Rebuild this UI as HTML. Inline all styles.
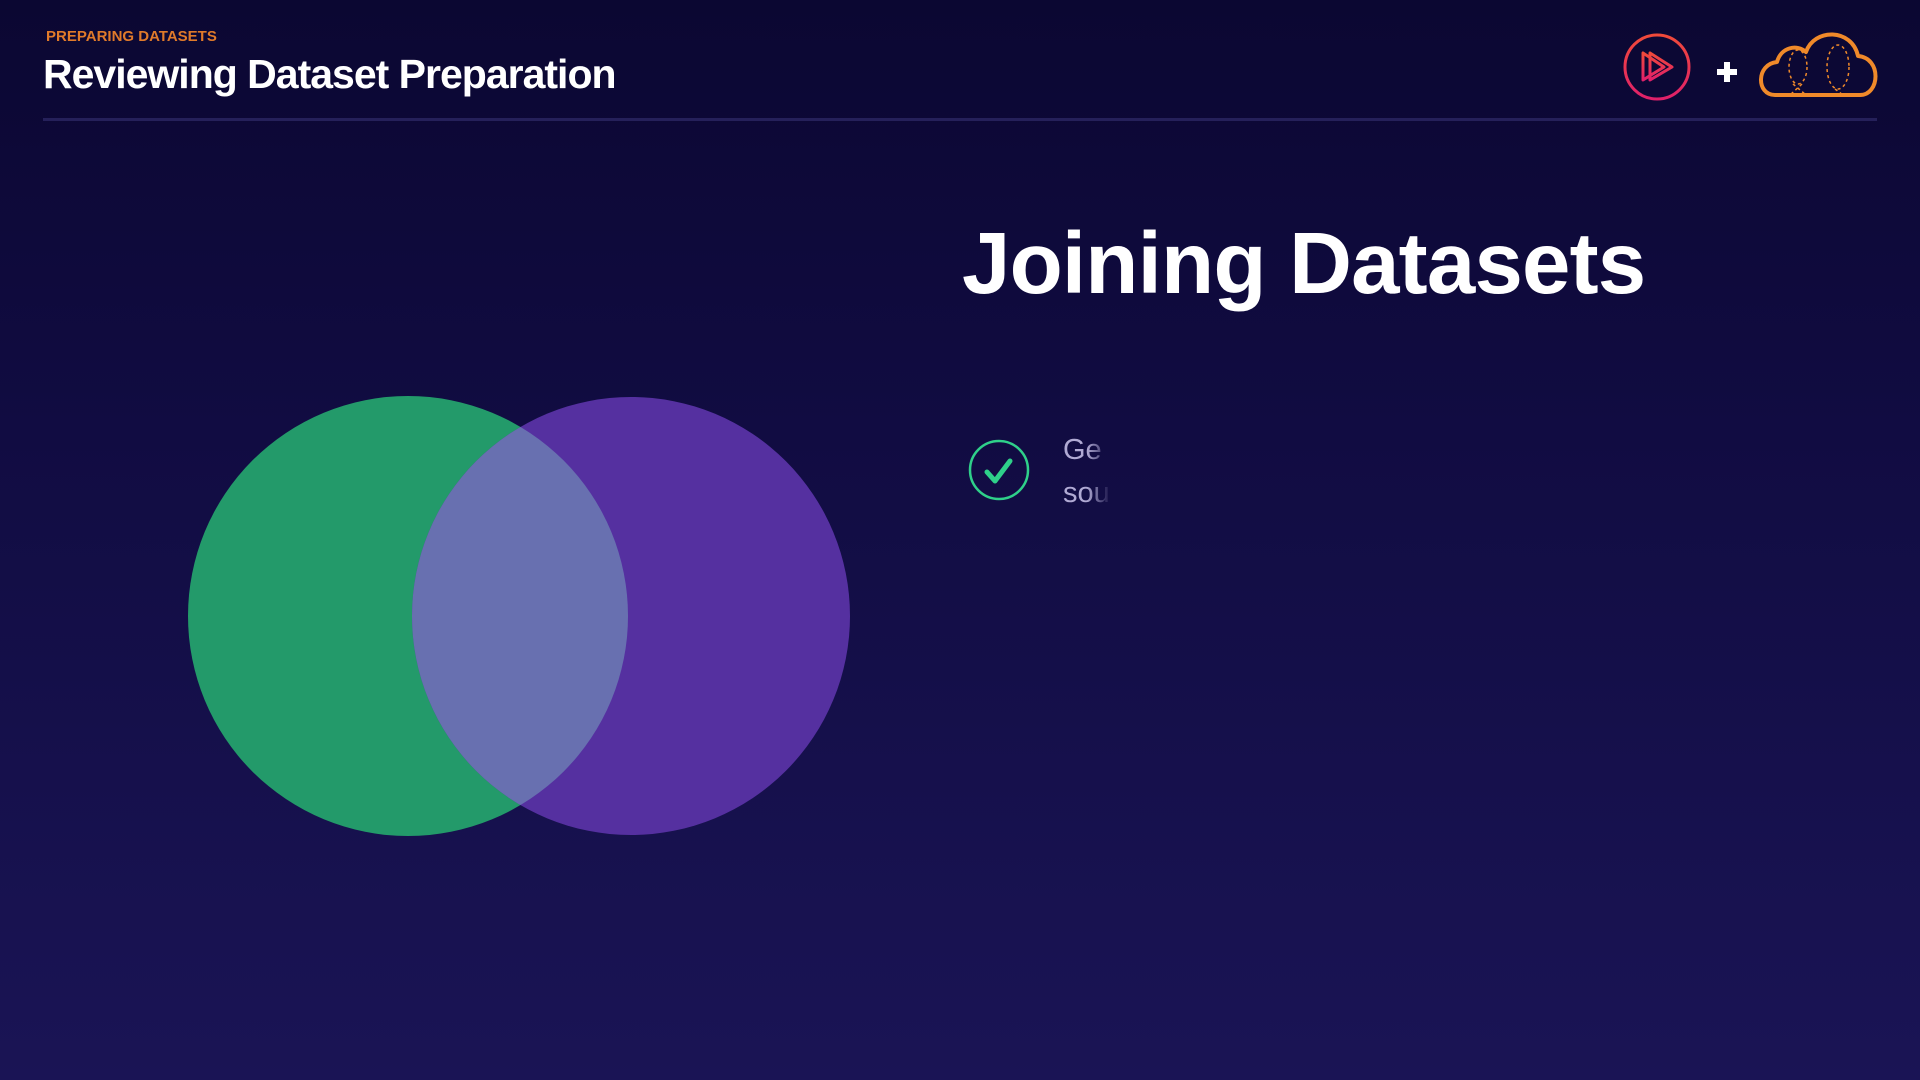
<!DOCTYPE html>
<html><head><meta charset="utf-8"><style>
html,body{margin:0;padding:0}
body{width:1920px;height:1080px;overflow:hidden;position:relative;background:linear-gradient(180deg,#0b0732 0%,#110c42 40%,#1a1455 100%);font-family:"Liberation Sans",sans-serif}
.lbl{position:absolute;left:46px;top:28px;color:#e07a2a;font-weight:bold;font-size:15px;letter-spacing:0}
.ttl{position:absolute;left:43px;top:51px;color:#fff;font-weight:bold;font-size:41px;letter-spacing:-1px}
.line{position:absolute;left:43px;top:118px;width:1834px;height:3px;background:#25205a}
.big{position:absolute;left:962px;top:214px;color:#fff;font-weight:bold;font-size:87px;letter-spacing:-0.8px}
.txt{position:absolute;left:1063px;color:#b0aad4;font-size:29px;width:48px;overflow:hidden;white-space:nowrap;-webkit-mask-image:linear-gradient(90deg,#000 50%,transparent);mask-image:linear-gradient(90deg,#000 50%,transparent)}
</style></head><body>
<div class="lbl">PREPARING DATASETS</div>
<div class="ttl">Reviewing Dataset Preparation</div>
<div class="line"></div>
<svg style="position:absolute;left:1610px;top:25px" width="280" height="90" viewBox="1610 25 280 90">
<defs><linearGradient id="pg" x1="0" y1="0" x2="0" y2="1"><stop offset="0" stop-color="#f04a3a"/><stop offset="1" stop-color="#e0206a"/></linearGradient></defs>
<circle cx="1657" cy="67" r="32" fill="none" stroke="url(#pg)" stroke-width="3"/>
<path d="M1643 53 L1643 80 L1664 67 Z M1650 53 L1650 80 L1672 67 Z" fill="none" stroke="url(#pg)" stroke-width="3" stroke-linejoin="round"/>
<path d="M1727 62 V82 M1717 72 H1737" stroke="#fff" stroke-width="6"/>
<path d="M1775 95 C1756 95 1756 64 1777 62 C1781 47 1797 44 1806 52 C1814 28 1852 28 1858 56 C1882 58 1880 95 1860 95 Z" fill="none" stroke="#f08a2a" stroke-width="4" stroke-linejoin="round"/>
<g fill="none" stroke="#f08a2a" stroke-width="1.5" stroke-dasharray="3 3">
<ellipse cx="1798" cy="67" rx="9" ry="17"/><ellipse cx="1838" cy="67" rx="11" ry="22"/>
<path d="M1793 84 L1806 95 M1802 84 L1790 95 M1835 89 L1843 95"/>
</g>
</svg>
<div class="big">Joining Datasets</div>
<svg style="position:absolute;left:965px;top:436px" width="70" height="70"><circle cx="34" cy="34" r="29" fill="none" stroke="#2fd08a" stroke-width="2.5"/><path d="M22 36 L30 45 L45 25" fill="none" stroke="#2fd08a" stroke-width="5" stroke-linecap="round" stroke-linejoin="round"/></svg>
<div class="txt" style="top:434px">Ge</div>
<div class="txt" style="top:477px">sou</div>
<svg style="position:absolute;left:0;top:0" width="1920" height="1080">
<circle cx="408" cy="616" r="220" fill="#239a6a"/>
<circle cx="631" cy="616" r="219" fill="#5530a0"/>
<clipPath id="c"><circle cx="408" cy="616" r="220"/></clipPath>
<circle cx="631" cy="616" r="219" fill="#6870b0" clip-path="url(#c)"/>
</svg>
</body></html>
